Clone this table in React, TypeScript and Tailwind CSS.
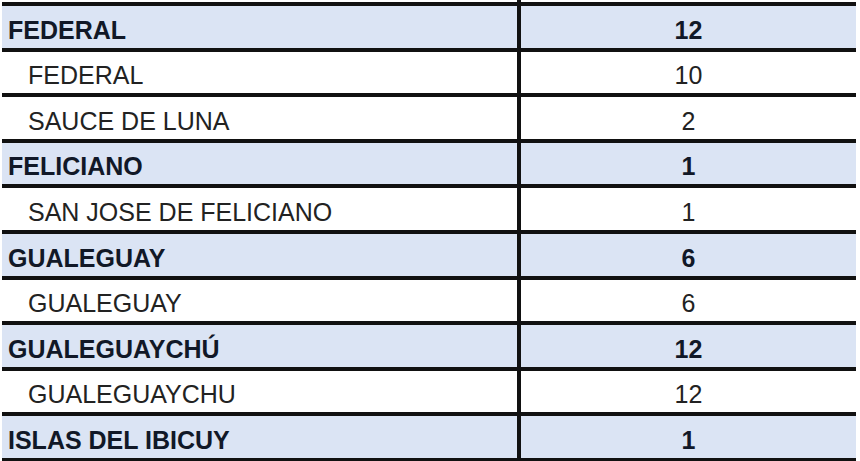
export default function App() {
  const rows = [
    { name: 'FEDERAL', value: '12', group: true },
    { name: 'FEDERAL', value: '10', group: false },
    { name: 'SAUCE DE LUNA', value: '2', group: false },
    { name: 'FELICIANO', value: '1', group: true },
    { name: 'SAN JOSE DE FELICIANO', value: '1', group: false },
    { name: 'GUALEGUAY', value: '6', group: true },
    { name: 'GUALEGUAY', value: '6', group: false },
    { name: 'GUALEGUAYCHÚ', value: '12', group: true },
    { name: 'GUALEGUAYCHU', value: '12', group: false },
    { name: 'ISLAS DEL IBICUY', value: '1', group: true },
  ]

  return (
    <div className="w-[860px] h-[461px] overflow-hidden bg-white font-['Liberation_Sans',Arial,sans-serif] text-[25px]">
      {/* column divider peeking above the top rule */}
      <div className="h-[2px] w-[4px] ml-[517px] bg-[#111]" />
      <div className="ml-[2px] w-[854px] border-t-4 border-[#111]">
        {rows.map((row, index) => (
          <div
            key={index}
            className={
              row.group
                ? 'grid grid-cols-[515px_4px_335px] h-[45.6px] border-b-4 border-[#111] bg-[#dbe4f4]'
                : 'grid grid-cols-[515px_4px_335px] h-[45.6px] border-b-4 border-[#111] bg-white'
            }
          >
            <div
              className={
                row.group
                  ? 'flex items-end pb-[5px] pl-[6px] leading-[25px] font-bold text-[#111827]'
                  : 'flex items-end pb-[5px] pl-[26px] leading-[25px] text-[#222]'
              }
            >
              {row.name}
            </div>
            <div className="bg-[#111]" />
            <div
              className={
                row.group
                  ? 'flex items-end justify-center pb-[5px] leading-[25px] font-bold text-[#111827]'
                  : 'flex items-end justify-center pb-[5px] leading-[25px] text-[#222]'
              }
            >
              {row.value}
            </div>
          </div>
        ))}
      </div>
    </div>
  )
}
